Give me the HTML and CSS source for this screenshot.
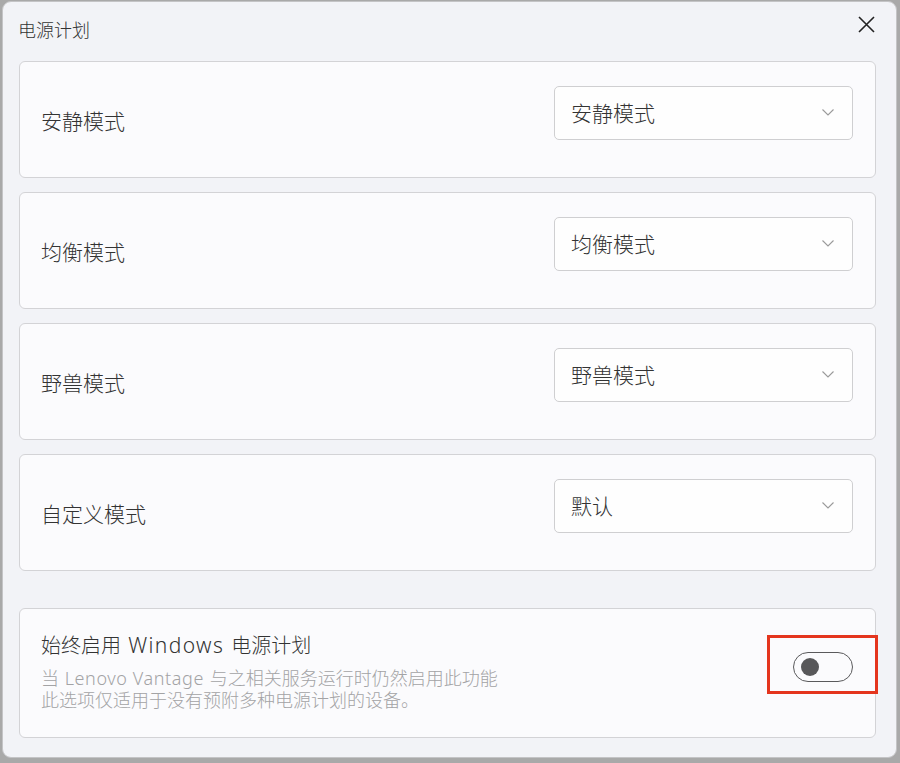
FILE: index.html
```html
<!DOCTYPE html>
<html lang="zh-CN">
<head>
<meta charset="utf-8">
<title>电源计划</title>
<link rel="stylesheet" href="styles.css">
</head>
<body>
<div class="window">
  <div class="header">
    <div class="title">电源计划</div>
    <svg class="close" width="17" height="17" viewBox="0 0 17 17"><path d="M1 1 L16 16 M16 1 L1 16" stroke="#222" stroke-width="1.6" fill="none"/></svg>
  </div>
  <div class="cards">
    <div class="card">
      <div class="label">安静模式</div>
      <div class="select"><span>安静模式</span><svg class="chev" width="12" height="7" viewBox="0 0 12 7"><path d="M0.5 0.5 L6 6 L11.5 0.5" stroke="#9a9a9a" stroke-width="1.1" fill="none"/></svg></div>
    </div>
    <div class="card">
      <div class="label">均衡模式</div>
      <div class="select"><span>均衡模式</span><svg class="chev" width="12" height="7" viewBox="0 0 12 7"><path d="M0.5 0.5 L6 6 L11.5 0.5" stroke="#9a9a9a" stroke-width="1.1" fill="none"/></svg></div>
    </div>
    <div class="card">
      <div class="label">野兽模式</div>
      <div class="select"><span>野兽模式</span><svg class="chev" width="12" height="7" viewBox="0 0 12 7"><path d="M0.5 0.5 L6 6 L11.5 0.5" stroke="#9a9a9a" stroke-width="1.1" fill="none"/></svg></div>
    </div>
    <div class="card">
      <div class="label">自定义模式</div>
      <div class="select"><span>默认</span><svg class="chev" width="12" height="7" viewBox="0 0 12 7"><path d="M0.5 0.5 L6 6 L11.5 0.5" stroke="#9a9a9a" stroke-width="1.1" fill="none"/></svg></div>
    </div>
  </div>
  <div class="card card-wide">
    <div class="text">
      <div class="wtitle">始终启用 <span class="latin">Windows</span> 电源计划</div>
      <div class="sub">当 <span class="latin">Lenovo Vantage</span> 与之相关服务运行时仍然启用此功能</div>
      <div class="sub">此选项仅适用于没有预附多种电源计划的设备。</div>
    </div>
    <div class="highlight">
      <div class="toggle"><div class="knob"></div></div>
    </div>
  </div>
</div>
</body>
</html>
```
FILE: styles.css
```css
* { box-sizing: border-box; }
html, body { margin: 0; padding: 0; }
body {
  width: 900px;
  height: 763px;
  background: #a9a9a9;
  font-family: "Noto Sans", "Noto Sans CJK SC", sans-serif;
  font-weight: 300;
  color: #333;
  overflow: hidden;
  padding: 1px 0 0 2px;
}
.window {
  width: 895px;
  height: 757px;
  background: #f2f3f7;
  border: 1px solid #c4c4c6;
  border-radius: 9px;
  padding: 0 20px 0 16px;
  display: flex;
  flex-direction: column;
}
.header {
  height: 59px;
  display: flex;
  justify-content: space-between;
  align-items: center;
}
.title {
  font-size: 18px;
  line-height: 24px;
  color: #333;
  margin-top: -4px;
  margin-left: -1px;
}
.close {
  align-self: flex-start;
  margin-top: 14px;
  margin-right: 1px;
}
.cards {
  display: flex;
  flex-direction: column;
  gap: 14px;
}
.card {
  height: 117px;
  background: #fbfbfd;
  border: 1px solid #d3d3d6;
  border-radius: 6px;
  display: flex;
  justify-content: space-between;
  align-items: flex-start;
  padding: 24px 22px 0 21px;
}
.label {
  font-size: 21px;
  line-height: 28px;
  margin-top: 21px;
  color: #333;
}
.select {
  width: 299px;
  height: 54px;
  background: #fefefe;
  border: 1px solid #cfcfd1;
  border-radius: 5px;
  display: flex;
  align-items: center;
  justify-content: space-between;
  padding: 0 18px 0 16px;
  font-size: 21px;
  color: #333;
}
.select span { margin-top: -2px; }
.chev { margin-top: -1px; }
.card-wide {
  margin-top: 37px;
  height: 130px;
  padding: 0 0 0 21px;
}
.text { margin-top: 24px; }
.wtitle {
  font-size: 20px;
  line-height: 26px;
  color: #333;
}
.sub {
  font-size: 18px;
  line-height: 22px;
  color: #a3a3a5;
}
.latin {
  margin: 0 1px;
}
.wtitle .latin {
  font-size: 21px;
  line-height: 20px;
  letter-spacing: 1.4px;
  margin: 0 2px;
}
.sub .latin { letter-spacing: 0.6px; }
.wtitle + .sub { margin-top: 8px; }
.highlight {
  margin-top: 26px;
  margin-right: -3px;
  border: 3px solid #e4351e;
  padding: 14px 22px 9px 23px;
}
.toggle {
  width: 60px;
  height: 30px;
  border: 1.5px solid #5a5a5c;
  border-radius: 15px;
  display: flex;
  align-items: center;
  padding-left: 7px;
}
.knob {
  width: 18px;
  height: 18px;
  border-radius: 50%;
  background: #58585a;
}
```
